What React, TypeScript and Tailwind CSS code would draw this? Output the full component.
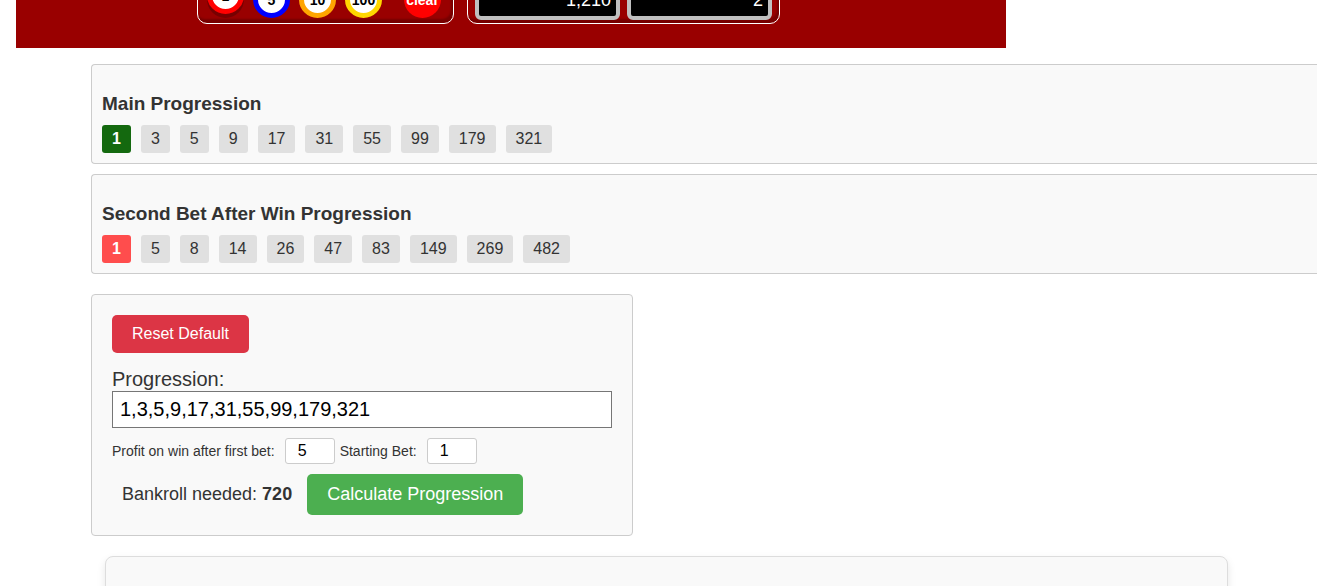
import React, { useState } from 'react';

interface ProgressionPanelProps {
  title: string;
  bets: number[];
  activeClass: string;
}

const MAIN_BETS = [1, 3, 5, 9, 17, 31, 55, 99, 179, 321];
const SECOND_BETS = [1, 5, 8, 14, 26, 47, 83, 149, 269, 482];

const CHIPS = [
  { value: 1, className: 'border-[#ff0000] -translate-y-1 shadow-[0_4px_0_#770000]' },
  { value: 5, className: 'border-[#0000ff]' },
  { value: 10, className: 'border-[#ffa500]' },
  { value: 100, className: 'border-[#ffd700]' },
];

const Display: React.FC<{ value: string }> = ({ value }) => (
  <div className="flex h-10 w-[145px] items-center justify-end rounded-md border-4 border-[#c0c0c0] bg-black px-[5px] text-lg text-white">
    {value}
  </div>
);

// Bottom edge of the table: chip rack on the left, bank and bet displays on the right
const TableFooter: React.FC = () => (
  <div className="ml-4 flex h-12 max-w-[990px] items-end gap-[13px] overflow-hidden bg-[#990000] pb-6 pl-[181px]">
    <div className="flex shrink-0 gap-[9px] rounded-[10px] border border-white pb-[5px] pl-[9px] pr-3 pt-2 shadow-[inset_-2px_-4px_2px_#770000]">
      {CHIPS.map((chip) => (
        <button
          key={chip.value}
          className={`flex h-[37px] w-[37px] items-center justify-center rounded-full border-[5px] bg-white text-sm font-bold text-black ${chip.className}`}
        >
          {chip.value}
        </button>
      ))}
      <button className="ml-[13px] flex h-[37px] w-[37px] items-center justify-center rounded-full bg-[#ff0000] text-sm font-bold text-white">
        clear
      </button>
    </div>
    <div className="flex shrink-0 gap-[7px] rounded-[10px] border border-white px-[7px] pb-[3px] pt-2 shadow-[inset_-2px_-4px_2px_#770000]">
      <Display value="1,210" />
      <Display value="2" />
    </div>
  </div>
);

const ProgressionPanel: React.FC<ProgressionPanelProps> = ({ title, bets, activeClass }) => (
  <section className="rounded-l border border-r-0 border-[#cccccc] bg-[#f9f9f9] px-[10px] pb-[10px] pt-7">
    <h3 className="mb-[10px] text-[19px] font-bold leading-[22px]">{title}</h3>
    <div className="flex flex-wrap gap-[10px]">
      {bets.map((bet, index) => (
        <span
          key={index}
          className={`rounded-[3px] px-[10px] py-[2px] text-base ${index === 0 ? activeClass : 'bg-[#e0e0e0]'}`}
        >
          {bet}
        </span>
      ))}
    </div>
  </section>
);

const Calculator: React.FC = () => {
  const [progression, setProgression] = useState(MAIN_BETS.join(','));
  const [profit, setProfit] = useState('5');
  const [startingBet, setStartingBet] = useState('1');

  const bankroll = progression.split(',').reduce((sum, bet) => sum + (Number(bet) || 0), 0);

  return (
    <section className="max-w-[542px] rounded border border-[#cccccc] bg-[#f9f9f9] p-5">
      <button
        onClick={() => setProgression(MAIN_BETS.join(','))}
        className="rounded-[5px] bg-[#dc3545] px-5 py-[7px] text-base text-white"
      >
        Reset Default
      </button>
      <label htmlFor="progression" className="mt-[14px] block text-xl leading-6">
        Progression:
      </label>
      <input
        id="progression"
        type="text"
        value={progression}
        onChange={(e) => setProgression(e.target.value)}
        className="block h-[37px] w-full border border-[#767676] bg-white px-[7px] text-xl text-black"
      />
      <div className="mt-[10px] flex items-center text-sm">
        <label htmlFor="profit">Profit on win after first bet:</label>
        <input
          id="profit"
          type="text"
          value={profit}
          onChange={(e) => setProfit(e.target.value)}
          className="ml-[10px] mr-[5px] h-[26px] w-[50px] rounded-[3px] border border-[#cccccc] bg-white px-3 text-base text-black"
        />
        <label htmlFor="starting-bet">Starting Bet:</label>
        <input
          id="starting-bet"
          type="text"
          value={startingBet}
          onChange={(e) => setStartingBet(e.target.value)}
          className="ml-[10px] h-[26px] w-[50px] rounded-[3px] border border-[#cccccc] bg-white px-3 text-base text-black"
        />
      </div>
      <div className="mt-[10px] flex items-center gap-[15px] pl-[10px] text-lg leading-[21px]">
        <p>
          Bankroll needed: <strong>{bankroll}</strong>
        </p>
        <button className="rounded-[5px] bg-[#4caf50] px-5 py-[10px] text-white">Calculate Progression</button>
      </div>
    </section>
  );
};

export default function App() {
  return (
    <div className="h-screen overflow-hidden bg-white font-['Liberation_Sans',Arial,sans-serif] text-[#333333]">
      <TableFooter />
      <main className="ml-[91px] mt-4">
        <div className="flex flex-col gap-[10px]">
          <ProgressionPanel title="Main Progression" bets={MAIN_BETS} activeClass="bg-[#14690f] font-bold text-white" />
          <ProgressionPanel
            title="Second Bet After Win Progression"
            bets={SECOND_BETS}
            activeClass="bg-[#ff4d4d] font-bold text-white"
          />
        </div>
        <div className="mt-5">
          <Calculator />
        </div>
        <section className="ml-[14px] mr-[89px] mt-5 h-40 rounded-lg border border-[#dddddd] bg-[#f9f9f9] shadow-[0_4px_8px_rgba(0,0,0,0.1)]" />
      </main>
    </div>
  );
}
